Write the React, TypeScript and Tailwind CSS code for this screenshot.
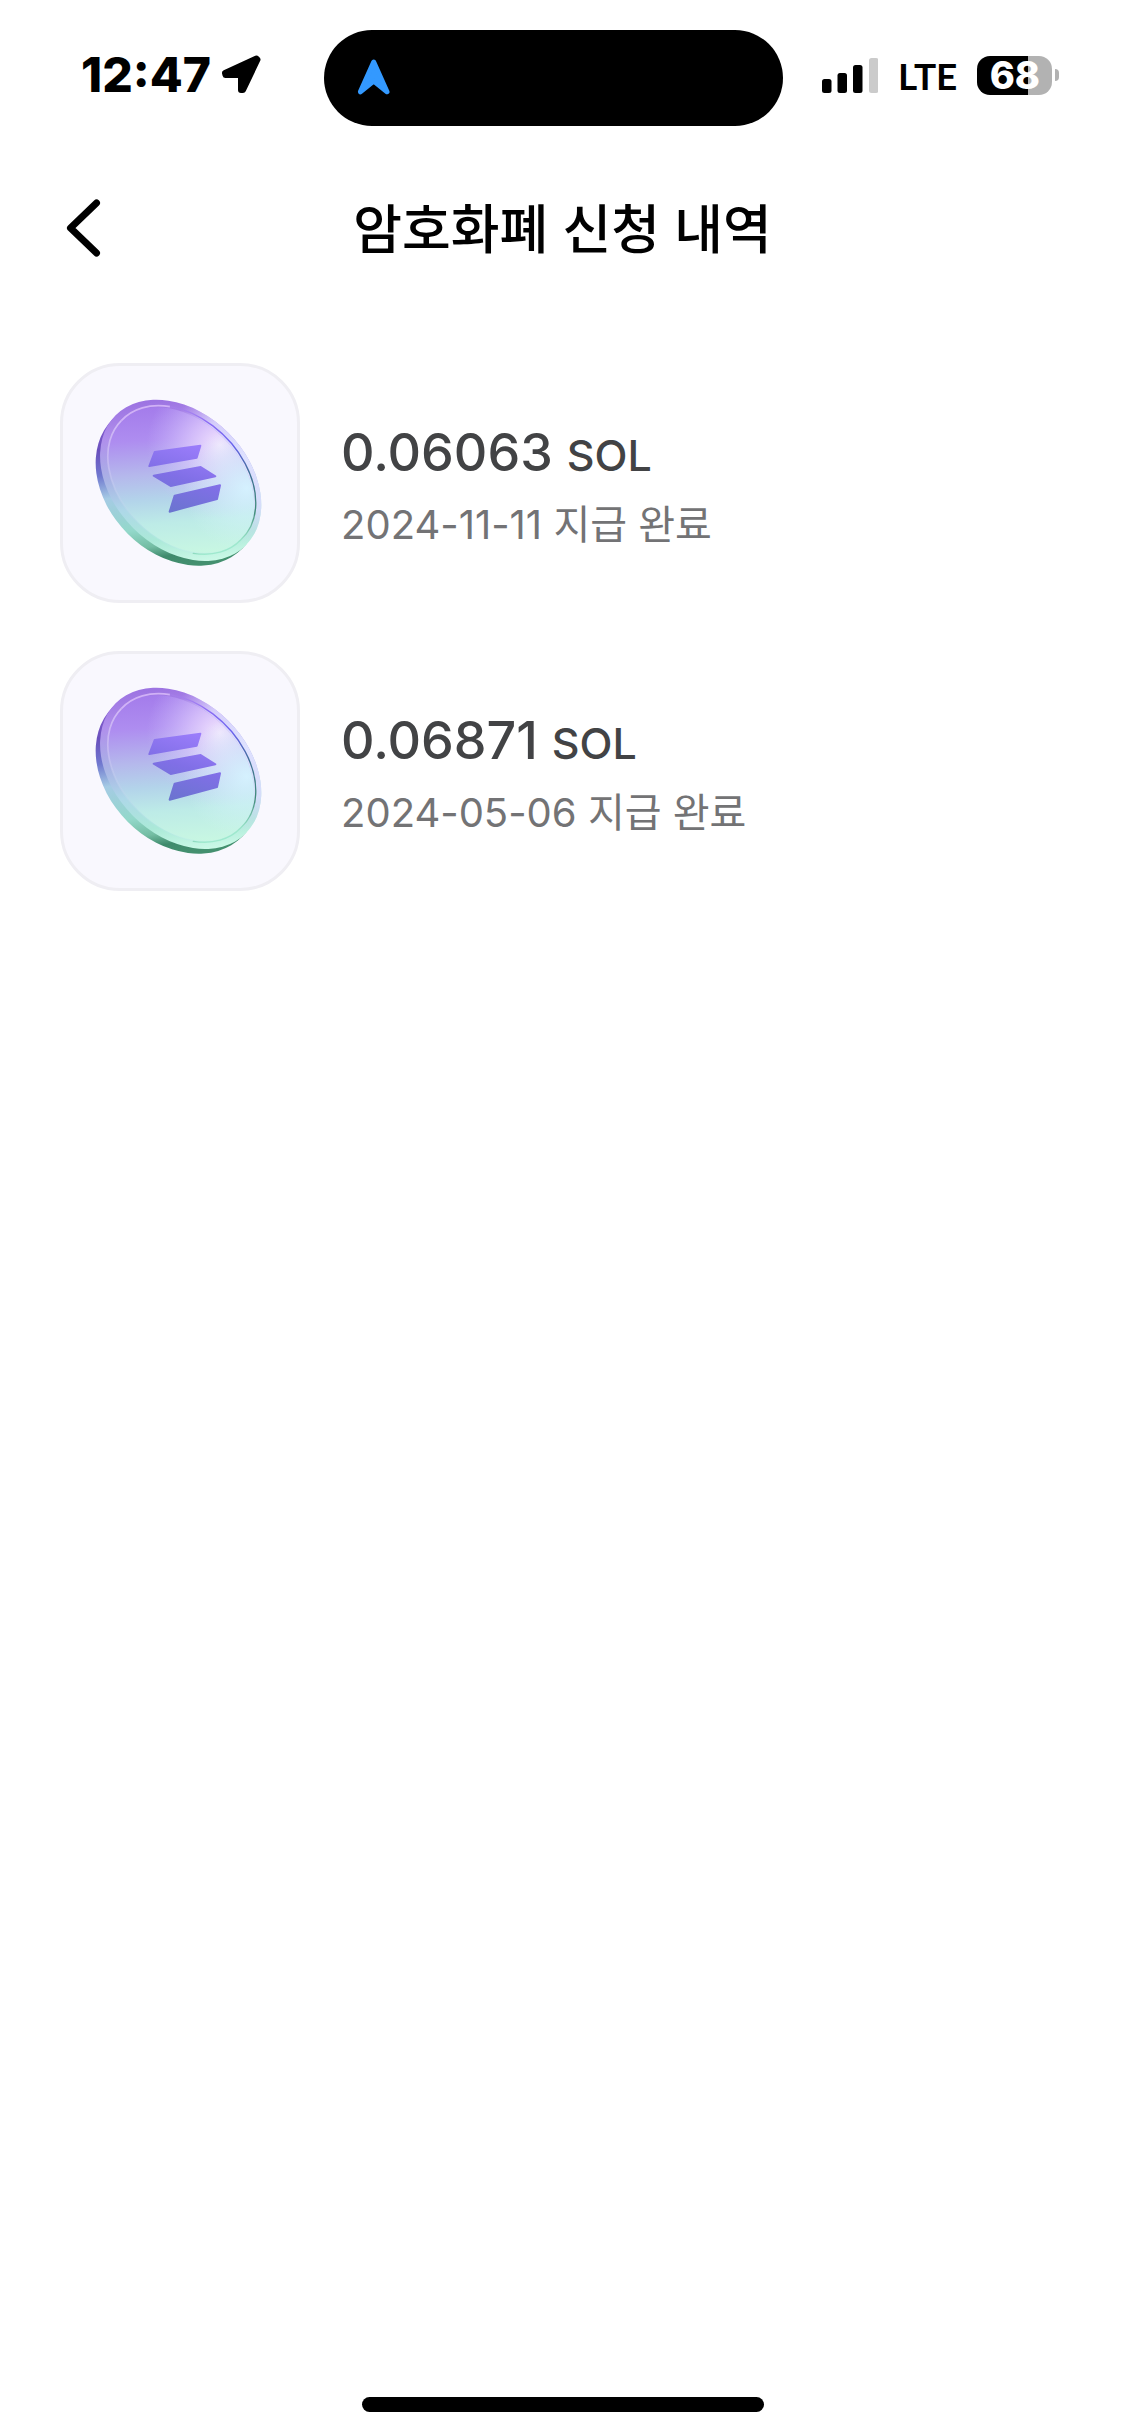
import React from "react";

type Payout = {
  id: number;
  amount: string;
  symbol: string;
  date: string;
  status: string;
};

const PAYOUTS: Payout[] = [
  {id: 1, amount: "0.06063", symbol: "SOL", date: "2024-11-11", status: "지급 완료"},
  {id: 2, amount: "0.06871", symbol: "SOL", date: "2024-05-06", status: "지급 완료"},
];

// ellipse leaning 45 degrees, as a path so that gradients stay upright
const tilted = (cx: number, cy: number, rx: number, ry: number) => {
  const d = rx * Math.SQRT1_2;

  return `M${cx - d} ${cy - d}A${rx} ${ry} 45 0 1 ${cx + d} ${cy + d}A${rx} ${ry} 45 0 1 ${cx - d} ${cy - d}Z`;
};

const BODY = tilted(382, 402, 275, 211);
const FRONT = tilted(392, 391, 276, 202);
const INNER = tilted(393, 391, 253, 180);

function StatusBar() {
  return (
    <div className="grid grid-cols-[324fr_459fr_342fr] items-center pt-[30px] text-black">
      <div className="flex items-center gap-2.5 pb-1.5 pl-[81px]">
        <span className="text-5xl leading-none font-extrabold">12:47</span>
        <svg aria-hidden="true" className="h-10 w-10" viewBox="0 0 40 40">
          <path
            d="M35.500 3.500 36.500 4.500 22 35 20 35V20H4.500L4 18Z"
            fill="#000"
            stroke="#000"
            strokeLinejoin="round"
            strokeWidth="6"
          />
        </svg>
      </div>
      <div className="flex h-24 items-center rounded-full bg-black pl-8">
        <svg aria-hidden="true" className="h-10 w-9" viewBox="0 0 36 40">
          <path
            d="M17.700 4 31 33.800 17.700 23 4.400 33.800Z"
            fill="#3399ff"
            stroke="#3399ff"
            strokeLinejoin="round"
            strokeWidth="5"
          />
        </svg>
      </div>
      <div className="flex items-center pb-1.5 pl-[39px]">
        <svg aria-hidden="true" className="h-9 w-14" viewBox="0 0 56 36">
          <rect height="14" rx="2.500" width="9.500" x="0" y="22" />
          <rect height="20" rx="2.500" width="9.500" x="15.500" y="16" />
          <rect height="28" rx="2.500" width="9.500" x="31" y="8" />
          <rect fill="#cbcbcb" height="35" rx="2.500" width="9.500" x="47" y="1" />
        </svg>
        <span className="ml-5 font-[Lato] text-[37px] leading-none font-bold">LTE</span>
        <div className="ml-5 flex items-center gap-[3px]">
          <div className="flex h-[39px] w-[75px] items-center justify-center rounded-[13px] bg-[linear-gradient(90deg,#000_68%,#b2b2b2_68%)]">
            <span className="text-[38px] leading-none font-extrabold text-white">68</span>
          </div>
          <div className="h-3 w-1 rounded-r-full bg-[#b2b2b2]" />
        </div>
      </div>
    </div>
  );
}

function SolanaCoin({id}: {id: number}) {
  const face = `face-${id}`;
  const edge = `edge-${id}`;
  const glow = `glow-${id}`;
  const cool = `cool-${id}`;
  const rim = `rim-${id}`;
  const pale = `pale-${id}`;
  const shine = `shine-${id}`;
  const groove = `groove-${id}`;
  const mark = `mark-${id}`;

  return (
    <svg aria-hidden="true" className="h-full w-full" viewBox="39 48 702 702">
      <defs>
        <linearGradient gradientUnits="userSpaceOnUse" id={edge} x1="300" x2="380" y1="148" y2="650">
          <stop offset="0" stopColor="#9a6ce0" />
          <stop offset="0.25" stopColor="#6a50bd" />
          <stop offset="0.4" stopColor="#7078cf" />
          <stop offset="0.54" stopColor="#a5cbe4" />
          <stop offset="0.75" stopColor="#93d8ca" />
          <stop offset="0.86" stopColor="#74bda3" />
          <stop offset="0.93" stopColor="#3f8a6c" />
          <stop offset="1" stopColor="#44906f" />
        </linearGradient>
        <linearGradient gradientUnits="userSpaceOnUse" id={rim} x1="350" x2="400" y1="150" y2="636">
          <stop offset="0" stopColor="#9d74e2" />
          <stop offset="0.2" stopColor="#b08fec" />
          <stop offset="0.45" stopColor="#a9b2e5" />
          <stop offset="0.65" stopColor="#aed8e8" />
          <stop offset="0.85" stopColor="#abe9d8" />
          <stop offset="1" stopColor="#c9f8e6" />
        </linearGradient>
        <radialGradient cx="590" cy="330" gradientUnits="userSpaceOnUse" id={pale} r="250">
          <stop offset="0" stopColor="#dfe2ff" />
          <stop offset="0.6" stopColor="#deddfe" stopOpacity="0.8" />
          <stop offset="1" stopColor="#dcd0fd" stopOpacity="0" />
        </radialGradient>
        <linearGradient gradientUnits="userSpaceOnUse" id={face} x1="370" x2="400" y1="166" y2="614">
          <stop offset="0" stopColor="#a47ceb" />
          <stop offset="0.22" stopColor="#ae8df0" />
          <stop offset="0.45" stopColor="#b5b8ec" />
          <stop offset="0.62" stopColor="#b3d4ea" />
          <stop offset="0.78" stopColor="#bdebe7" />
          <stop offset="1" stopColor="#c8f7e2" />
        </linearGradient>
        <radialGradient cx="510" cy="285" gradientUnits="userSpaceOnUse" id={glow} r="220">
          <stop offset="0" stopColor="#f7eaff" stopOpacity="0.95" />
          <stop offset="0.4" stopColor="#e6d5ff" stopOpacity="0.65" />
          <stop offset="1" stopColor="#cfc4ff" stopOpacity="0" />
        </radialGradient>
        <radialGradient cx="590" cy="415" gradientUnits="userSpaceOnUse" id={cool} r="190">
          <stop offset="0" stopColor="#d6f3ff" stopOpacity="0.95" />
          <stop offset="1" stopColor="#d3f5f5" stopOpacity="0" />
        </radialGradient>
        <linearGradient gradientUnits="userSpaceOnUse" id={shine} x1="300" x2="220" y1="166" y2="540">
          <stop offset="0" stopColor="#e0c4fb" stopOpacity="0.9" />
          <stop offset="0.5" stopColor="#cdc0f3" stopOpacity="0.7" />
          <stop offset="1" stopColor="#b9e6ea" stopOpacity="0.3" />
        </linearGradient>
        <linearGradient gradientUnits="userSpaceOnUse" id={groove} x1="380" x2="530" y1="166" y2="614">
          <stop offset="0" stopColor="#a780ee" stopOpacity="0.4" />
          <stop offset="0.15" stopColor="#8f6cf5" />
          <stop offset="0.35" stopColor="#6a63ee" />
          <stop offset="0.55" stopColor="#3f6f96" />
          <stop offset="0.8" stopColor="#3f8d78" />
          <stop offset="0.95" stopColor="#9ee9cd" />
        </linearGradient>
        <linearGradient gradientUnits="userSpaceOnUse" id={mark} x1="440" x2="380" y1="290" y2="487">
          <stop offset="0" stopColor="#9a7cfa" />
          <stop offset="0.5" stopColor="#806fe6" />
          <stop offset="1" stopColor="#6b74d0" />
        </linearGradient>
      </defs>

      {/* thick edge, then the front face over it */}
      <path d={BODY} fill={`url(#${edge})`} />
      <path d={FRONT} fill={`url(#${rim})`} />
      <path d={FRONT} fill={`url(#${pale})`} />
      <path d={INNER} fill={`url(#${face})`} />
      <path d={INNER} fill={`url(#${glow})`} />
      <path d={INNER} fill={`url(#${cool})`} />

      {/* left shine and right groove of the inner ring */}
      <path d="M214 212A253 180 45 0 0 572 570" fill="none" stroke={`url(#${shine})`} strokeWidth="5" />
      <path d="M214 212A253 180 45 0 1 360 170" fill="none" stroke="#dcbffa" strokeOpacity="0.8" strokeWidth="5" />
      <path
        d="M360 170A253 180 45 0 1 572 570A253 180 45 0 1 430 610"
        fill="none"
        stroke={`url(#${groove})`}
        strokeLinecap="round"
        strokeWidth="4"
      />

      <g fill={`url(#${mark})`} stroke={`url(#${mark})`} strokeLinejoin="round" strokeWidth="6">
        <path d="M314 306 451 287 440 323 298 348Z" />
        <path d="M311 377 452 351 496 379 362 408Z" />
        <path d="M374 437 510 406 501 447 359 485Z" />
      </g>
    </svg>
  );
}

function PayoutItem({payout}: {payout: Payout}) {
  return (
    <li className="flex items-center gap-[41px]">
      <div className="h-60 w-60 shrink-0 overflow-hidden rounded-[60px] border-3 border-[#efeef3] bg-[#f9f8fe]">
        <SolanaCoin id={payout.id} />
      </div>
      <div className="flex flex-col gap-1.5 pt-3">
        <p className="text-[52px] leading-[64px] font-medium text-[#424345]">
          {payout.amount} <span className="text-[43px]">{payout.symbol}</span>
        </p>
        <p className="text-[40px] leading-[64px] text-[#737375]">
          {payout.date} {payout.status}
        </p>
      </div>
    </li>
  );
}

export default function App() {
  return (
    <div className="flex min-h-screen flex-col bg-white font-[Inter,'Noto_Sans_CJK_KR',sans-serif]">
      <StatusBar />
      <header className="mt-[54px] grid h-24 grid-cols-[1fr_auto_1fr] items-center px-[60px]">
        <button aria-label="뒤로" className="justify-self-start" type="button">
          <svg aria-hidden="true" className="h-16 w-12" fill="none" viewBox="0 0 48 64">
            <path
              d="M36.500 7 10.500 32 36.500 57"
              stroke="#000"
              strokeLinecap="round"
              strokeLinejoin="round"
              strokeWidth="7"
            />
          </svg>
        </button>
        <h1 className="pt-1 text-[53px] leading-none font-medium text-black">암호화폐 신청 내역</h1>
      </header>
      <main className="mt-[87px] px-[60px]">
        <ul className="flex flex-col gap-12">
          {PAYOUTS.map((payout) => (
            <PayoutItem key={payout.id} payout={payout} />
          ))}
        </ul>
      </main>
      <div className="mt-auto flex justify-center pb-6">
        <div className="h-[15px] w-[402px] rounded-full bg-black" />
      </div>
    </div>
  );
}
